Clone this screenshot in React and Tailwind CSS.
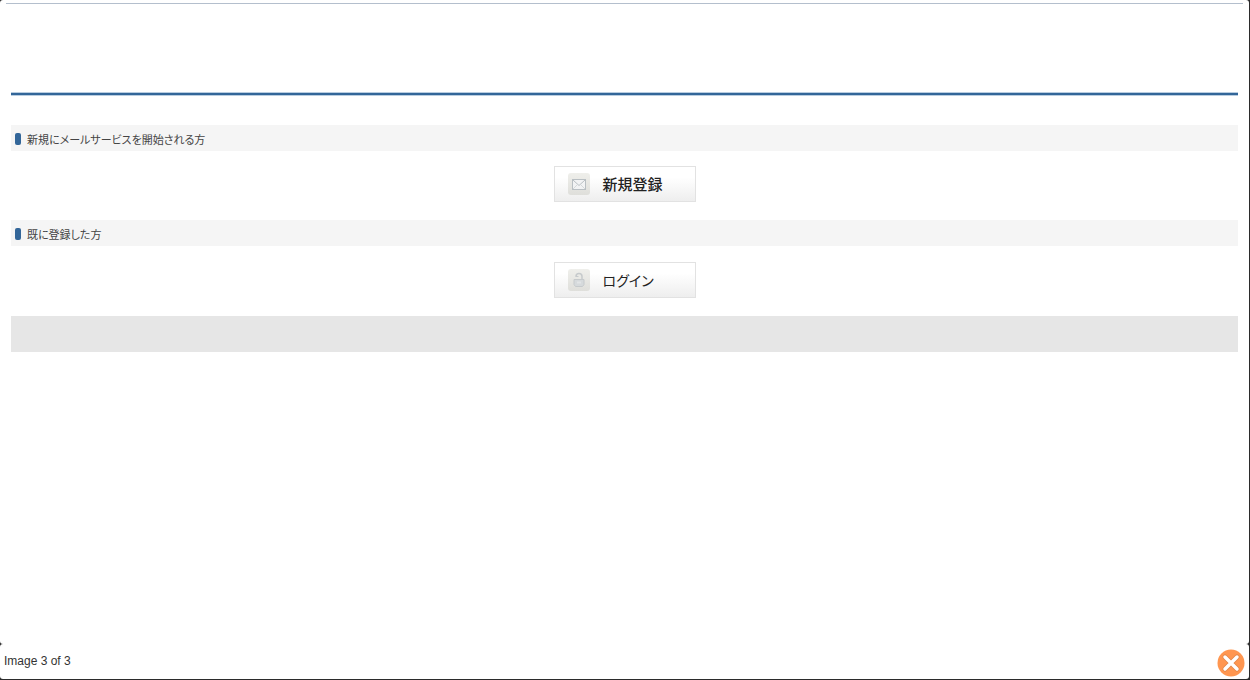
import React from "react";

function SectionTitle({ children }) {
  return (
    <h2 className="flex h-[26px] items-center gap-[6px] bg-[#f5f5f5] pt-px pl-1 text-[11px] leading-6 text-[#444]">
      <span className="h-3 w-[6px] rounded-[2px] bg-[#336699]" />
      {children}
    </h2>
  );
}

function ImageButton({ icon, label, className }) {
  return (
    <button
      type="button"
      className="mx-auto flex h-9 w-[142px] items-center gap-[13px] border border-[#e2e2e2] bg-linear-to-b from-white from-30% to-[#eeeeee] pl-[13px] leading-8 text-[#222]"
    >
      <span className="flex size-[22px] items-center justify-center rounded-[3px] bg-linear-to-b from-[#efefeb] to-[#dfdfdb]">
        {icon}
      </span>
      <span className={className}>{label}</span>
    </button>
  );
}

function MailIcon() {
  return (
    <svg width="16" height="14" viewBox="0 0 16 14" fill="none" stroke="#b9bfc3">
      <rect x="1.5" y="2.5" width="13" height="10" fill="#f2f3f4" />
      <path d="M2 12l4-4M14 12l-4-4" stroke="#d5d9da" />
      <path d="M2 3l6 5.5L14 3" />
    </svg>
  );
}

function LockIcon() {
  return (
    <svg width="14" height="16" viewBox="0 0 14 16" fill="none" stroke="#c6cacc">
      <path d="M4 4.5Q4 1.5 7 1.5T10 4.5V8" strokeWidth="1.5" />
      <path d="M3.5 4.5h3" />
      <path
        d="M2 7.5h10v5l-1.5 2h-7l-1.5-2z"
        fill="#d6dadc"
        strokeLinejoin="round"
      />
      <path d="M5 9.5h4v2H5z" fill="#e2e5e6" stroke="none" />
    </svg>
  );
}

export default function App() {
  return (
    <div className="flex h-screen flex-col bg-[#2b2b2b] pr-px pb-px font-['Liberation_Sans','Noto_Sans_CJK_JP',sans-serif]">
      <main className="flex-1 rounded-[3px] bg-white px-[11px] pt-[3px]">
        <div className="-mx-[5px] h-px bg-[#b4bfcd]" />
        <div className="mt-[88px] h-1 border-y border-[#b9cde0] bg-[#336699]" />

        <div className="mt-[29px] font-['Noto_Sans_CJK_JP',sans-serif] [font-feature-settings:'palt']">
          <SectionTitle>新規にメールサービスを開始される方</SectionTitle>
          <div className="pt-[15px] pb-[18px]">
            <ImageButton
              icon={<MailIcon />}
              label="新規登録"
              className="text-[15px] font-medium"
            />
          </div>
          <SectionTitle>既に登録した方</SectionTitle>
          <div className="pt-4 pb-[18px]">
            <ImageButton
              icon={<LockIcon />}
              label="ログイン"
              className="text-[14px]"
            />
          </div>
        </div>

        <div className="h-9 bg-[#e6e6e6]" />
      </main>

      <footer className="flex h-[35px] items-end justify-between rounded-[3px] bg-white px-1 pb-[2px]">
        <p className="text-[12px] leading-8 text-[#333]">Image 3 of 3</p>
        <button type="button" aria-label="Close">
          <svg className="block" width="28" height="28" viewBox="0 0 28 28">
            <circle cx="14" cy="14" r="13.5" fill="#ff9650" />
            <path
              d="M8 8l12 12M20 8L8 20"
              stroke="#b86f3c"
              strokeWidth="5"
              strokeLinecap="round"
              opacity="0.4"
            />
            <path
              d="M8 8l12 12M20 8L8 20"
              stroke="#fff"
              strokeWidth="3.5"
              strokeLinecap="round"
            />
          </svg>
        </button>
      </footer>
    </div>
  );
}
